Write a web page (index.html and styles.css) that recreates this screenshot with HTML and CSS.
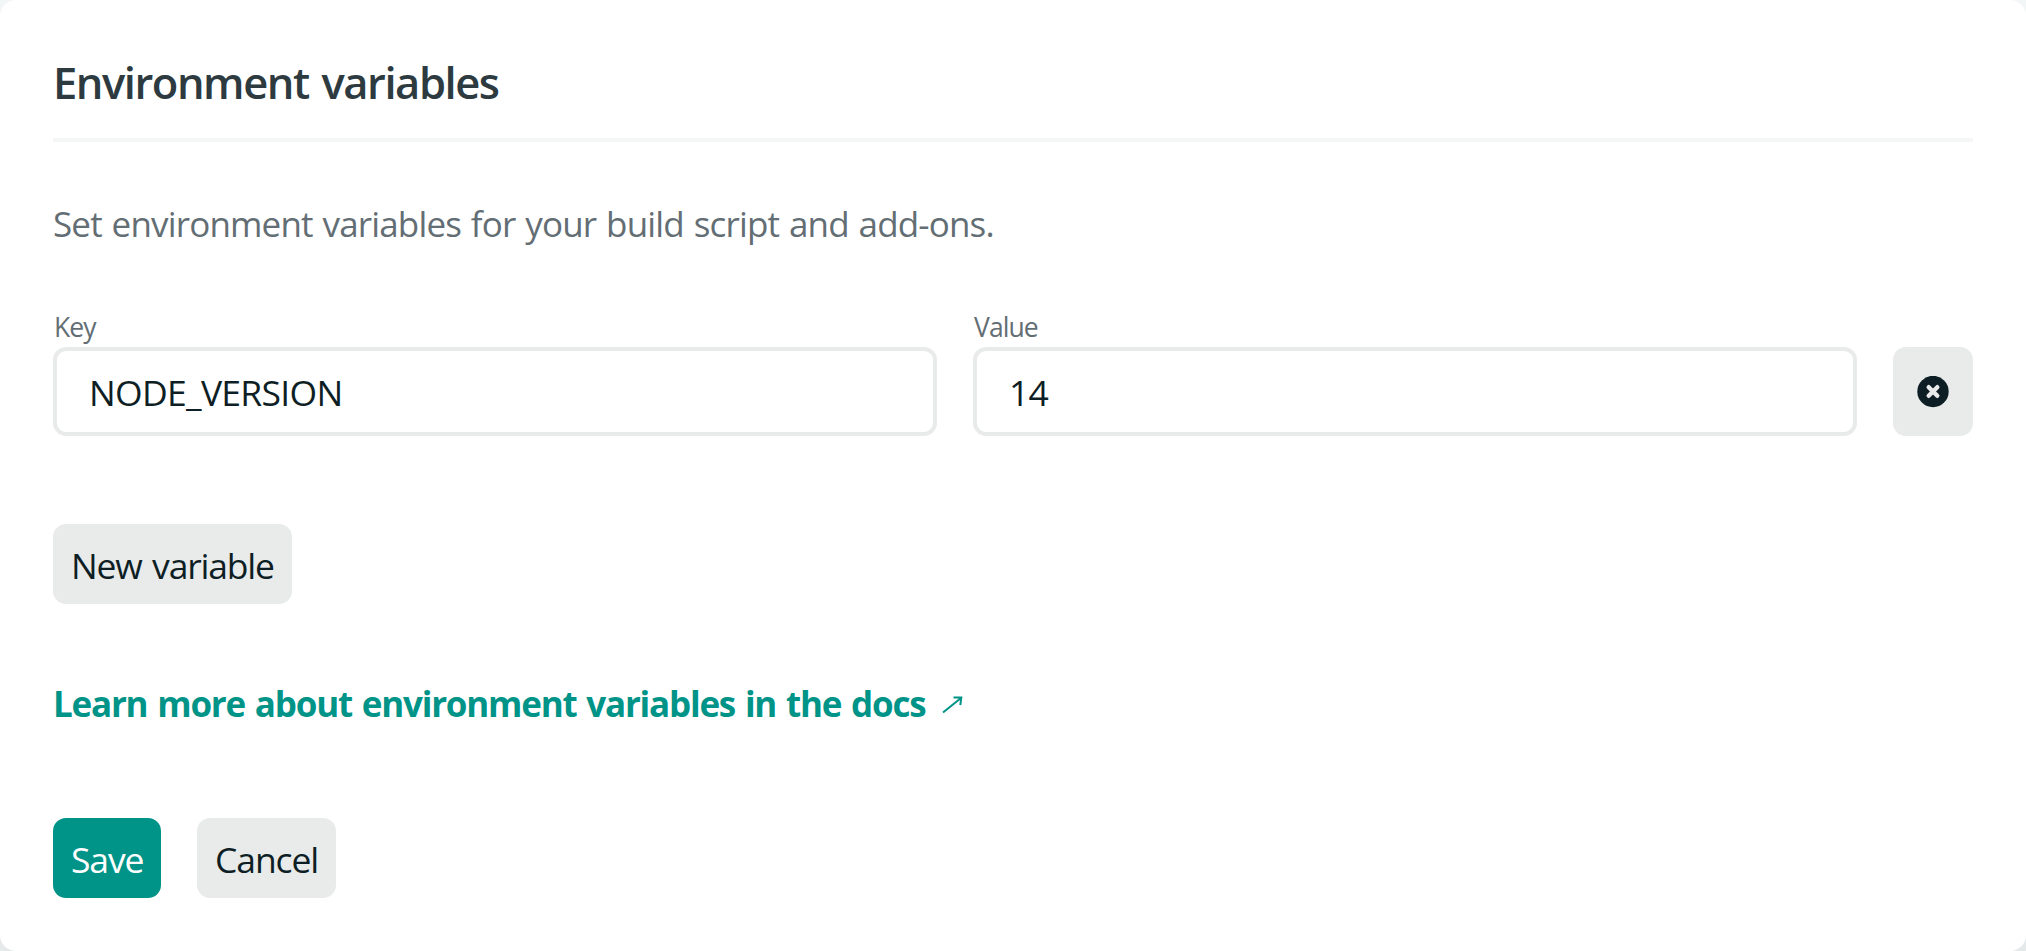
FILE: index.html
```
<!DOCTYPE html>
<html lang="en">
<head>
<meta charset="utf-8">
<title>Environment variables</title>
<link rel="stylesheet" href="styles.css">
</head>
<body>
<main class="card">
  <h2 class="title">Environment variables</h2>
  <p class="desc">Set environment variables for your build script and add-ons.</p>
  <div class="row">
    <div class="field"><div class="label">Key</div><div class="input">NODE_VERSION</div></div>
    <div class="field"><div class="label">Value</div><div class="input">14</div></div>
    <button class="btn remove" aria-label="Remove variable">
      <svg width="32" height="32" viewBox="0 0 32 32"><circle cx="16" cy="15.5" r="15.7" fill="#0e1e25"/><path d="M11.7 11.2l8.6 8.6M20.3 11.2l-8.6 8.6" stroke="#e9ebeb" stroke-width="4.4" stroke-linecap="round"/></svg>
    </button>
  </div>
  <button class="btn new">New variable</button>
  <a class="link">Learn more about environment variables in the docs<svg class="arrow" width="21" height="18" viewBox="0 0 21 18" fill="none" stroke="#009488" stroke-width="2"><path d="M1 16.5L19 2M11.5 1.6L19.3 1.6L18.3 9.2"/></svg></a>
  <div class="actions">
    <button class="btn save">Save</button>
    <button class="btn cancel">Cancel</button>
  </div>
</main>
</body>
</html>
```
FILE: styles.css
```
* { box-sizing: border-box; }
body { margin: 0; background: linear-gradient(#f3f6f6, #e6e9e9); font-family: "Open Sans", "Noto Sans", sans-serif; font-size: 35.5px; color: #0e1e25; }
.card { height: 951px; padding: 51px 53px; background: #fff; border-radius: 16px; overflow: hidden; }
.title { margin: 0; height: 91px; border-bottom: 4px solid #f5f7f7; font-size: 43.5px; font-weight: 600; letter-spacing: -1.45px; word-spacing: 3px; line-height: 64px; color: #2d3b41; white-space: nowrap; }
.desc { margin: 55px 0 0; line-height: 54px; height: 54px; font-size: 35px; letter-spacing: -0.83px; word-spacing: 1.5px; color: #636e74; white-space: nowrap; }
.row { display: grid; grid-template-columns: 884px 884px 80px; gap: 36px; align-items: end; margin-top: 60px; height: 125px; }
.label { font-size: 26.5px; line-height: 32px; height: 36px; letter-spacing: -0.9px; color: #636e74; padding-left: 1px; }
.input { height: 89px; border: 4px solid #e9ebeb; border-radius: 13px; padding: 0 32px; line-height: 82px; letter-spacing: -0.7px; }
.btn { display: flex; align-items: center; border: 0; border-radius: 13px; padding: 1px 18px 0; height: 80px; background: #e9ebeb; color: #0e1e25; font: inherit; line-height: 54px; letter-spacing: -1.1px; white-space: nowrap; }
.remove { height: 89px; padding: 0; justify-content: center; }
.new { width: 239px; margin-top: 88px; letter-spacing: -1.2px; word-spacing: 2.5px; }
.link { display: flex; align-items: center; margin-top: 73px; height: 54px; line-height: 54px; font-size: 35px; font-weight: 700; letter-spacing: -1.22px; word-spacing: 2px; color: #009488; white-space: nowrap; }
.arrow { margin: 2px 0 0 17px; }
.actions { display: flex; gap: 36px; margin-top: 87px; }
.save { width: 108px; background: #009488; color: #fff; }
.cancel { width: 139px; }
```
